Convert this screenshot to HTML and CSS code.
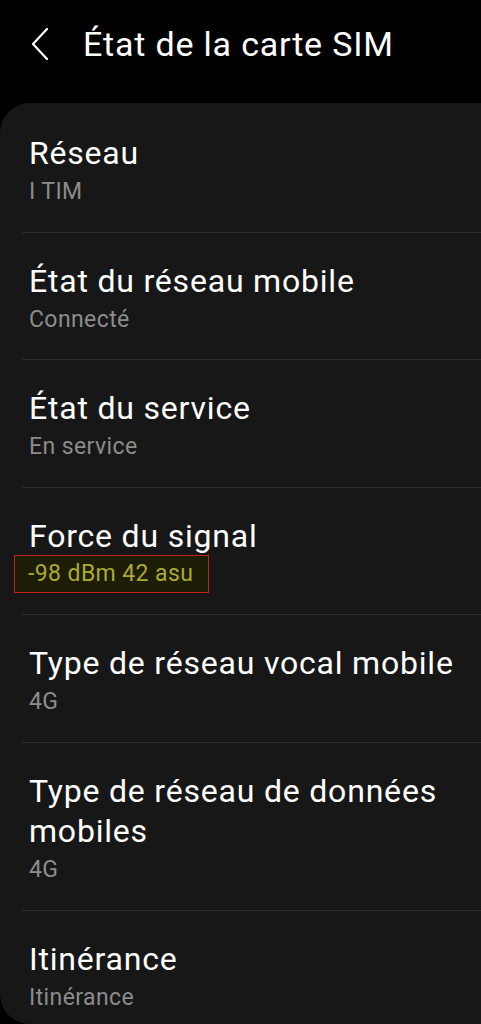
FILE: index.html
```html
<!doctype html>
<html>
<head>
<meta charset="UTF-8">
<title>État de la carte SIM</title>
<link rel="stylesheet" href="styles.css">
</head>
<body>
	<div class="header">
		<svg class="back" width="18" height="32" viewBox="0 0 18 32">
			<polyline points="16,1 2,16 16,31" fill="none" stroke="#fff" stroke-width="2.2" stroke-linecap="round" stroke-linejoin="round"/>
		</svg>
		<h1>État de la carte SIM</h1>
	</div>
	<div class="card">
		<div class="row">
			<div class="title">Réseau</div>
			<div class="sub">I TIM</div>
		</div>
		<div class="row">
			<div class="title">État du réseau mobile</div>
			<div class="sub">Connecté</div>
		</div>
		<div class="row">
			<div class="title">État du service</div>
			<div class="sub">En service</div>
		</div>
		<div class="row">
			<div class="title">Force du signal</div>
			<div class="sub"><span class="mark">-98 dBm 42 asu</span></div>
		</div>
		<div class="row">
			<div class="title">Type de réseau vocal mobile</div>
			<div class="sub">4G</div>
		</div>
		<div class="row">
			<div class="title">Type de réseau de données mobiles</div>
			<div class="sub">4G</div>
		</div>
		<div class="row">
			<div class="title">Itinérance</div>
			<div class="sub">Itinérance</div>
		</div>
	</div>
</body>
</html>
```

FILE: styles.css
```css
html, body {
	margin:0;
	padding:0;
	background:#000;
	}

body {
	width:481px;
	height:1024px;
	overflow:hidden;
	font-family:Roboto, "Noto Sans", sans-serif;
	color:#fff;
	}

.header {
	height:103px;
	display:flex;
	align-items:center;
	padding-left:31px;
	box-sizing:border-box;
	padding-bottom:16px;
	}

.back {
	display:block;
	margin-right:34px;
	}

.header h1 {
	margin:0;
	font-size:34px;
	font-weight:400;
	letter-spacing:0.8px;
	line-height:40px;
	}

.card {
	background:#171717;
	height:921px;
	border-radius:30px 0 0 30px;
	overflow:hidden;
	}

.row {
	padding:30px 20px 24.6px 29px;
	}

.row + .row {
	border-top:1px solid #2c2c2c;
	margin-left:22px;
	padding-left:7px;
	padding-top:28px;
	}

.title {
	font-size:32px;
	letter-spacing:0.8px;
	line-height:40px;
	}

.sub {
	font-size:23px;
	letter-spacing:0.4px;
	line-height:30px;
	margin-top:4px;
	color:#8c8c8c;
	}

.mark {
	display:inline-block;
	vertical-align:top;
	color:#a9a933;
	background:#1d1d05;
	border:1px solid #c2211d;
	line-height:28px;
	padding:4px 15px 4px 13px;
	margin:-5px 0 -3px -15px;
	}
```
